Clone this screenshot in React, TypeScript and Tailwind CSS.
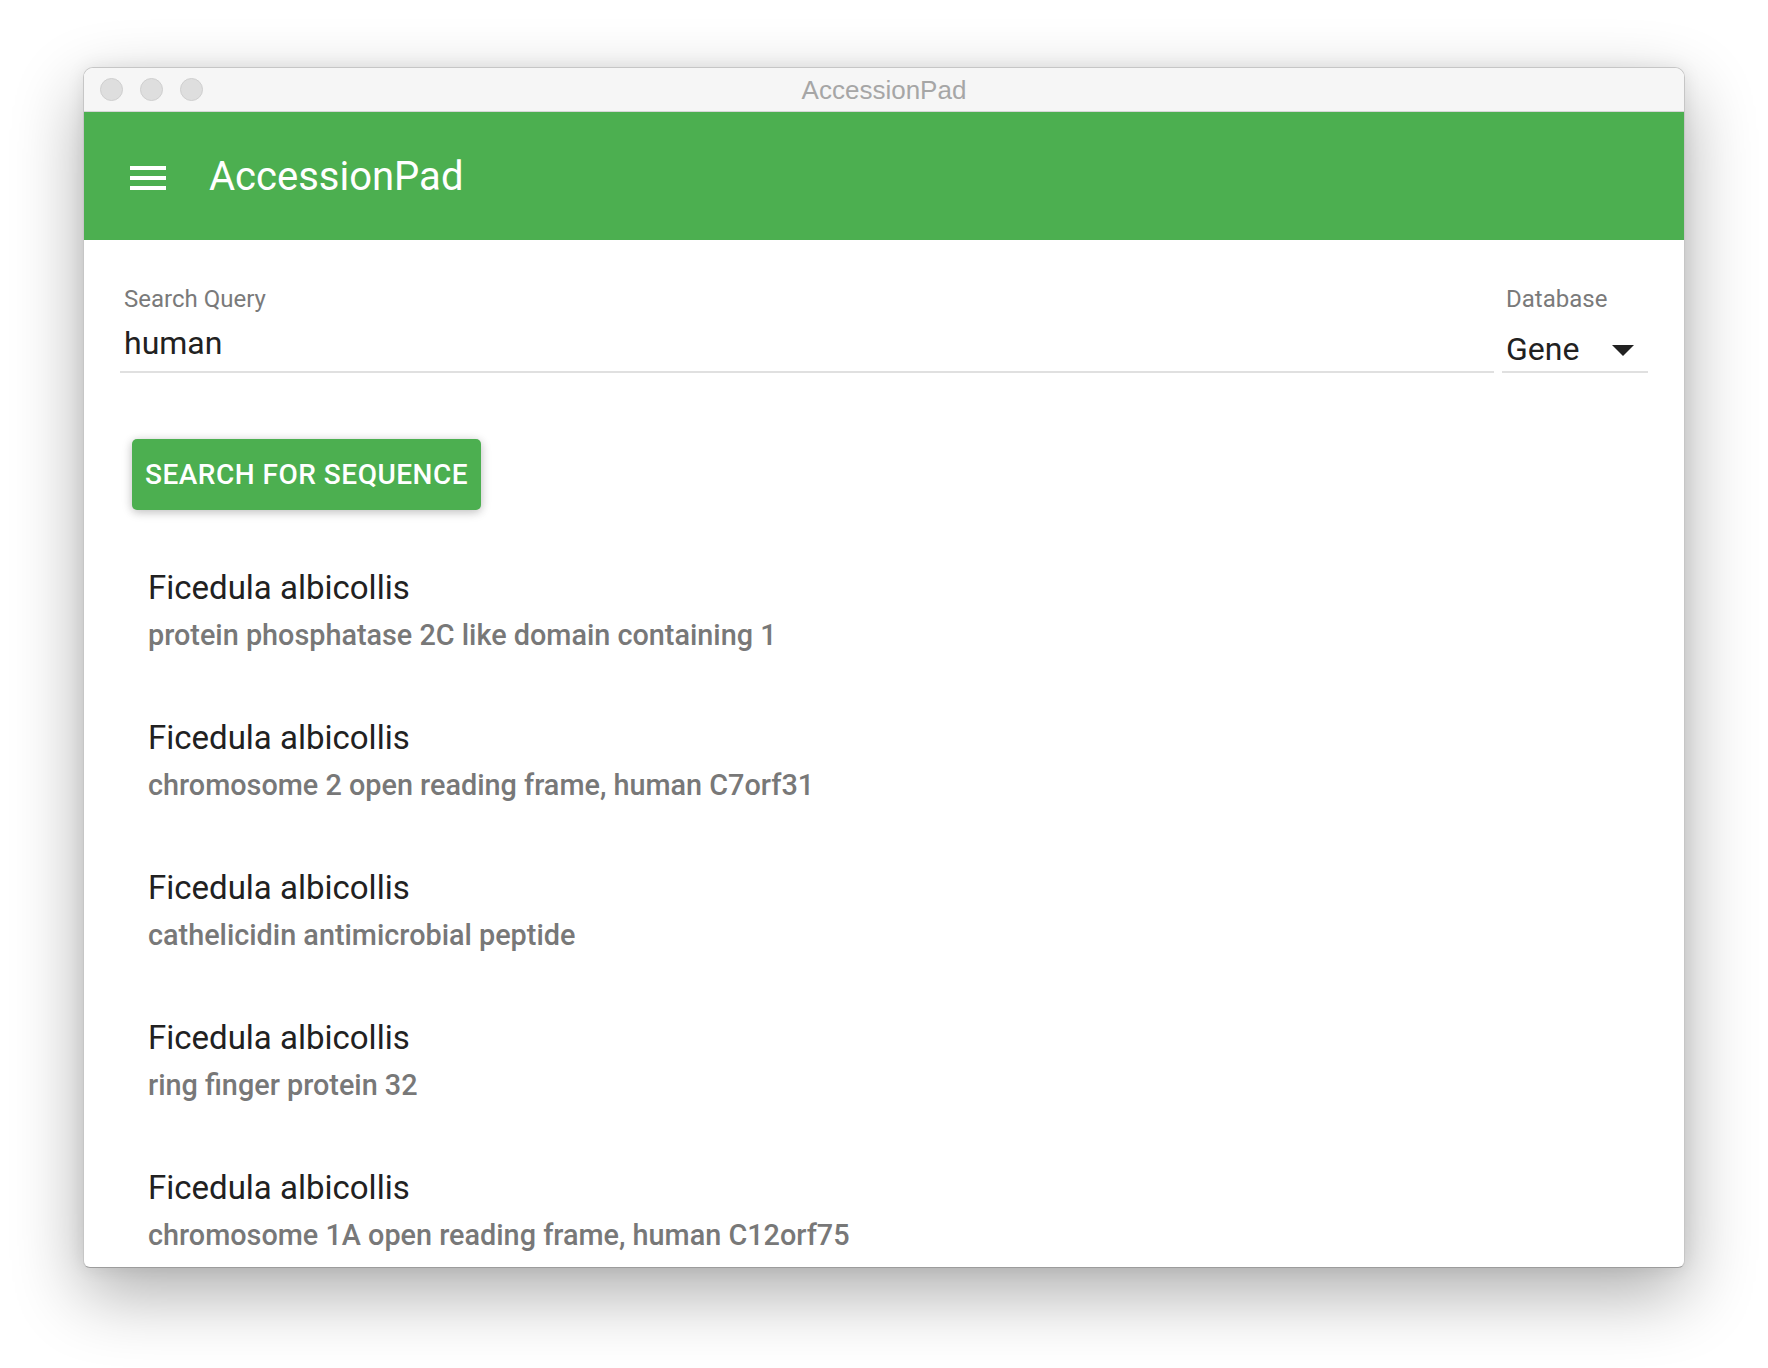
import React from "react";

// ===== Data =====
type Hit = { organism: string; title: string };

const HITS: Hit[] = [
  { organism: "Ficedula albicollis", title: "protein phosphatase 2C like domain containing 1" },
  { organism: "Ficedula albicollis", title: "chromosome 2 open reading frame, human C7orf31" },
  { organism: "Ficedula albicollis", title: "cathelicidin antimicrobial peptide" },
  { organism: "Ficedula albicollis", title: "ring finger protein 32" },
  { organism: "Ficedula albicollis", title: "chromosome 1A open reading frame, human C12orf75" },
];

const roboto = { fontFamily: "Roboto, 'Noto Sans', sans-serif" };

function MenuIcon() {
  return (
    <svg width="48" height="48" viewBox="0 0 24 24" fill="#fff">
      <path d="M3 18h18v-2H3v2zm0-5h18v-2H3v2zm0-7v2h18V6H3z" />
    </svg>
  );
}

function TrafficLight() {
  return <div className="w-[23px] h-[23px] rounded-full bg-[#dedede] border border-[#cfcfcf]" />;
}

export default function App() {
  return (
    <div className="w-[1768px] h-[1368px] bg-white pt-[67px] pl-[83px] overflow-hidden">
      {/* window */}
      <div
        className="w-[1602px] h-[1201px] rounded-t-[10px] rounded-b-[7px] border border-[#c6c6c6] border-b-[#9c9c9c] bg-white overflow-hidden flex flex-col shadow-[0_26px_70px_rgba(0,0,0,0.32),0_0_18px_rgba(0,0,0,0.08)]"
        style={roboto}
      >
        {/* title bar */}
        <div className="h-[44px] shrink-0 bg-[#f6f6f6] border-b border-[#d6d6d6] grid grid-cols-[1fr_auto_1fr] items-center">
          <div className="flex items-center gap-[17px] pl-[16px]">
            <TrafficLight />
            <TrafficLight />
            <TrafficLight />
          </div>
          <div
            className="text-[26px] leading-none text-[#a6a6a6]"
            style={{ fontFamily: "'Liberation Sans', Arial, sans-serif" }}
          >
            AccessionPad
          </div>
          <div />
        </div>

        {/* app bar */}
        <div className="h-[128px] shrink-0 bg-[#4caf50] flex items-center pl-[40px]">
          <div className="mt-[4px]">
            <MenuIcon />
          </div>
          <div className="ml-[37px] mt-[2px] text-[40px] leading-none text-white">AccessionPad</div>
        </div>

        {/* content */}
        <div className="flex-1 overflow-hidden px-[36px]">
          <div className="flex gap-[8px]">
            <div className="flex-1">
              <div className="mt-[47px] pl-[4px] text-[24px] leading-[24px] text-[#7a7a7a]">Search Query</div>
              <div className="mt-[12px] pl-[4px] text-[32px] leading-[40px] text-[#212121]">human</div>
              <div className="mt-[8px] h-[2px] bg-[#e0e0e0]" />
            </div>
            <div className="w-[146px]">
              <div className="mt-[47px] pl-[4px] text-[24px] leading-[24px] text-[#7a7a7a]">Database</div>
              <div className="mt-[20px] pl-[4px] h-[36px] flex items-center justify-between pr-[14px]">
                <span className="text-[32px] leading-[36px] text-[#212121]">Gene</span>
                <svg width="22" height="11" viewBox="0 0 22 11" className="mt-[2px]">
                  <path d="M0 0h22L11 11z" fill="#212121" />
                </svg>
              </div>
              <div className="mt-[4px] h-[2px] bg-[#e0e0e0]" />
            </div>
          </div>

          <button className="mt-[66px] ml-[12px] h-[71px] px-[13px] rounded-[5px] bg-[#4caf50] text-white text-[28px] tracking-[0.5px] font-medium uppercase shadow-[0_2px_12px_rgba(0,0,0,0.14),0_2px_8px_rgba(0,0,0,0.14)]">
            Search for sequence
          </button>

          <ul className="mt-[25px]">
            {HITS.map((h, i) => (
              <li key={i} className="pl-[28px] pt-[33px] pb-[32px]">
                <div className="text-[33px] leading-[40px] text-[#212121]">{h.organism}</div>
                <div className="mt-[9px] text-[28.8px] leading-[36px] font-medium text-[#787878]">{h.title}</div>
              </li>
            ))}
          </ul>
        </div>
      </div>
    </div>
  );
}
